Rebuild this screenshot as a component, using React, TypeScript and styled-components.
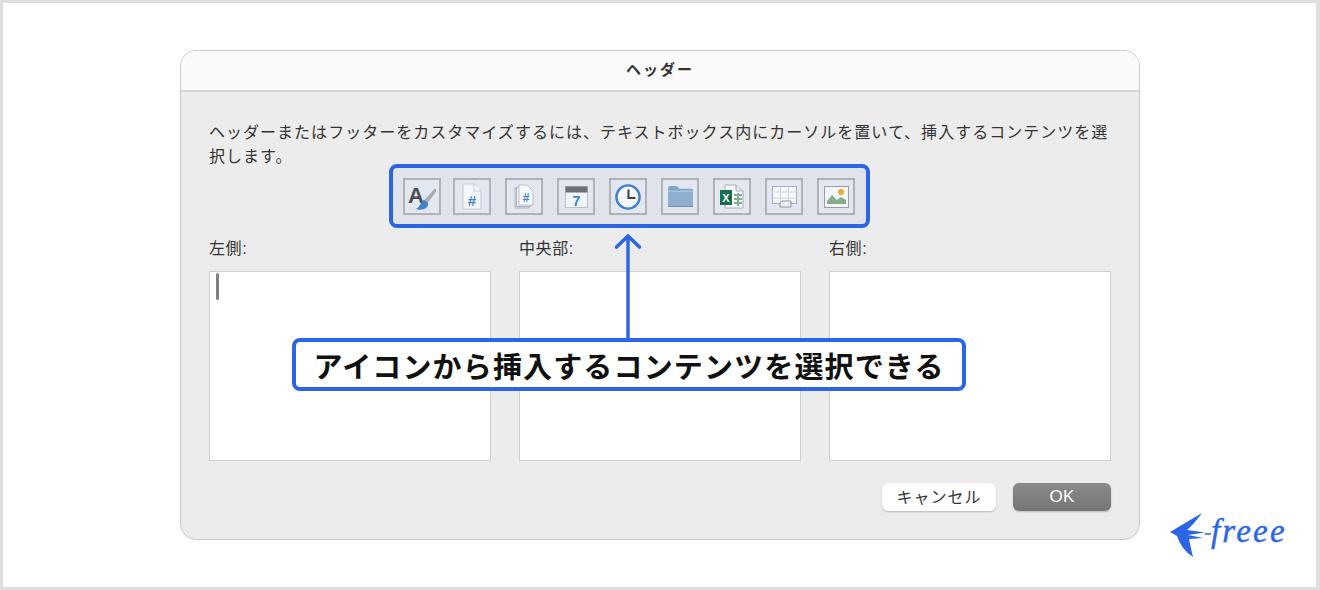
import React from 'react';
import styled, { createGlobalStyle } from 'styled-components';

const BLUE = '#2b65e6';
const ICON_BLUE = '#3f80d0';

const GlobalStyle = createGlobalStyle`
  html, body {
    margin: 0;
    padding: 0;
    background: #fff;
    font-family: "Liberation Sans", "Noto Sans CJK JP", sans-serif;
  }
  * { box-sizing: border-box; }
`;

const Page = styled.div`
  position: relative;
  width: 1320px;
  height: 590px;
  padding: 47px 177px;
  background: #fff;
  border: 3px solid #dedede;
  border-right-width: 4px;
`;

const Dialog = styled.div`
  position: relative;
  width: 960px;
  height: 490px;
  display: flex;
  flex-direction: column;
  background: #ececec;
  border: 1px solid #c9c9c9;
  border-radius: 16px;
  overflow: hidden;
`;

const TitleBar = styled.div`
  height: 41px;
  flex: none;
  display: flex;
  align-items: center;
  justify-content: center;
  padding-bottom: 4px;
  background: #fafafa;
  border-bottom: 2px solid #d6d6d6;
  font-size: 15px;
  font-weight: 700;
  letter-spacing: 2px;
  color: #333;
`;

const Body = styled.div`
  flex: 1;
  display: flex;
  flex-direction: column;
  padding: 29px 28px 0;
`;

const Intro = styled.p`
  margin: 0;
  font-size: 16px;
  line-height: 24px;
  letter-spacing: 1.02px;
  color: #333;
  width: 904px;
`;

const Toolbar = styled.div`
  align-self: flex-start;
  display: flex;
  gap: 14px;
  width: 481px;
  height: 64px;
  margin: -5px 0 0 180px;
  padding: 10px 10px;
  background: #e0e3ec;
  border: 4px solid ${BLUE};
  border-radius: 8px;
`;

const ToolButton = styled.div`
  width: 38px;
  height: 37px;
  flex: none;
  display: flex;
  align-items: center;
  justify-content: center;
  background: #e3e7f2;
  border: 2px solid #b1b2b6;

  &:first-child {
    margin-right: -2px;
  }
`;

const Columns = styled.div`
  display: grid;
  grid-template-columns: repeat(3, 282px);
  gap: 28px;
  margin-top: 10px;
`;

const Column = styled.div`
  display: flex;
  flex-direction: column;
`;

const ColumnLabel = styled.div`
  height: 33px;
  font-size: 16px;
  line-height: 22px;
  letter-spacing: 0.6px;
  color: #333;
`;

const TextBox = styled.div`
  position: relative;
  height: 190px;
  background: #fff;
  border: 1px solid #cfcfcf;
`;

const Caret = styled.span`
  position: absolute;
  left: 6px;
  top: 1px;
  width: 3px;
  height: 27px;
  border-radius: 2px;
  background: #808080;
`;

const Actions = styled.div`
  display: flex;
  justify-content: flex-end;
  gap: 17px;
  margin-top: 22px;
`;

const Button = styled.div<{ $primary?: boolean }>`
  height: 28px;
  width: ${(p) => (p.$primary ? '98px' : '114px')};
  display: flex;
  align-items: center;
  justify-content: center;
  padding-bottom: ${(p) => (p.$primary ? '0' : '2px')};
  border-radius: 6px;
  font-size: ${(p) => (p.$primary ? '17px' : '16px')};
  letter-spacing: ${(p) => (p.$primary ? '0.2px' : '1px')};
  color: ${(p) => (p.$primary ? '#fff' : '#333')};
  background: ${(p) => (p.$primary ? 'linear-gradient(#8a8a8a, #767676)' : '#fff')};
  box-shadow: 0 1px 2px rgba(0, 0, 0, 0.22);
`;

const Arrow = styled.svg`
  position: absolute;
  left: 431px;
  top: 182px;
`;

const Callout = styled.div`
  position: absolute;
  left: 111px;
  top: 287px;
  width: 674px;
  height: 53px;
  display: flex;
  align-items: center;
  justify-content: center;
  background: #fff;
  border: 4px solid ${BLUE};
  border-radius: 8px;
  font-size: 29px;
  font-weight: 700;
  letter-spacing: 1.15px;
  color: #111;
`;

const Logo = styled.div`
  position: absolute;
  left: 1164px;
  top: 506px;
  display: flex;
  align-items: center;
  color: ${BLUE};
`;

const Wordmark = styled.span`
  position: relative;
  top: -2px;
  font-family: "Liberation Serif", serif;
  font-style: italic;
  font-size: 33px;
  line-height: 33px;
  letter-spacing: 2.2px;
  -webkit-text-stroke: 0.4px ${BLUE};
`;

const StyleIcon = () => (
  <svg width="28" height="26" viewBox="0 0 28 26">
    <text x="0" y="19" fontFamily="Liberation Sans" fontWeight="700" fontSize="22" fill="#4a4d55">A</text>
    <path d="M27 5 L16 17 L19 19 L28 7 Z" fill="#a9adb8" stroke="#8b8f99" strokeWidth="0.6" />
    <path d="M16 16 C13 17 13 22 8 25 C15 27 21 24 20 19 Z" fill={ICON_BLUE} />
  </svg>
);

const PageIcon = () => (
  <svg width="20" height="27" viewBox="0 0 20 27">
    <path d="M1 1 H12 L19 8 V26 H1 Z" fill="#f4f6fb" stroke="#c6cad2" />
    <path d="M12 1 V8 H19" fill="#fbfcfe" stroke="#c6cad2" />
    <text x="10" y="23" textAnchor="middle" fontFamily="Liberation Sans" fontWeight="700" fontSize="15" fill={ICON_BLUE}>#</text>
  </svg>
);

const PagesIcon = () => (
  <svg width="20" height="25" viewBox="0 0 20 25">
    <path d="M1 4 H12 L15 7 V24 H1 Z" fill="#dfe2e9" stroke="#aeb2bb" />
    <path d="M2.5 3 H13 L17 7 V22.5 H2.5 Z" fill="#eceef4" stroke="#aeb2bb" />
    <path d="M5 1 H13 L19 7 V21 H5 Z" fill="#f6f8fc" stroke="#bcc0c9" />
    <text x="12" y="18" textAnchor="middle" fontFamily="Liberation Sans" fontWeight="700" fontSize="12" fill={ICON_BLUE}>#</text>
  </svg>
);

const CalendarIcon = () => (
  <svg width="23" height="22" viewBox="0 0 23 22">
    <rect x="0.5" y="0.5" width="22" height="21" fill="#f1f4f9" stroke="#bcc0c8" />
    <rect x="0.5" y="0.5" width="22" height="6" fill="#6e6f74" />
    <text x="11.5" y="20" textAnchor="middle" fontFamily="Liberation Sans" fontWeight="700" fontSize="14" fill={ICON_BLUE}>7</text>
  </svg>
);

const ClockIcon = () => (
  <svg width="26" height="26" viewBox="0 0 28 28">
    <circle cx="14" cy="14" r="12.5" fill="#f5f7fb" stroke={ICON_BLUE} strokeWidth="2.6" />
    <path d="M14.5 6 V15 H22" fill="none" stroke="#3d4149" strokeWidth="2.2" />
  </svg>
);

const FolderIcon = () => (
  <svg width="27" height="23" viewBox="0 0 28 24">
    <path d="M1 4 Q1 1 4 1 H10 L13 4 H26 Q27 4 27 6 V10 H1 Z" fill="#84a4c6" />
    <path d="M1 6 H27 V21 Q27 23 25 23 H3 Q1 23 1 21 Z" fill="#8fafd0" />
    <path d="M1 6 H27 V7 H1 Z" fill="#b4cbe2" />
    <path d="M1 22 H27 V23 H1 Z" fill="#6f8fb2" />
  </svg>
);

const ExcelIcon = () => (
  <svg width="24" height="25" viewBox="0 0 24 25">
    <path d="M5 1 H16 L23 7 V24 H5 Z" fill="#f8f9fc" stroke="#a9adb6" />
    <path d="M16 1 V7 H23" fill="#e3e6ec" stroke="#a9adb6" />
    <path d="M14 11 H22 M14 15 H22 M14 19 H22 M18 9 V22" stroke="#7fb08f" strokeWidth="2" fill="none" />
    <rect x="0" y="6" width="12" height="15" fill="#17704a" />
    <text x="6" y="18" textAnchor="middle" fontFamily="Liberation Sans" fontWeight="700" fontSize="11" fill="#fff">X</text>
  </svg>
);

const SheetIcon = () => (
  <svg width="25" height="22" viewBox="0 0 25 22">
    <rect x="0.5" y="0.5" width="24" height="17" fill="#f8f9fc" stroke="#a9adb6" />
    <path d="M0.5 6 H24.5 M0.5 12 H24.5 M8.5 0.5 V17.5 M16.5 0.5 V17.5" stroke="#cfd3da" fill="none" />
    <path d="M8 21 V17 L10 15 H19 V17.5 M8 21 H19 V17" fill="#eef0f5" stroke="#8f939c" />
  </svg>
);

const PictureIcon = () => (
  <svg width="25" height="22" viewBox="0 0 25 22">
    <rect x="0.5" y="0.5" width="24" height="21" fill="#f4f5f9" stroke="#9a9da5" />
    <circle cx="17" cy="6" r="3" fill="#e5ab3a" />
    <path d="M3 18 V15 L8 9 L13 14 L17 11 L22 14 V18 Z" fill="#83ad8d" />
  </svg>
);

const tools = [StyleIcon, PageIcon, PagesIcon, CalendarIcon, ClockIcon, FolderIcon, ExcelIcon, SheetIcon, PictureIcon];

const App: React.FC = () => (
  <Page>
    <GlobalStyle />
    <Dialog>
      <TitleBar>ヘッダー</TitleBar>
      <Body>
        <Intro>ヘッダーまたはフッターをカスタマイズするには、テキストボックス内にカーソルを置いて、挿入するコンテンツを選択します。</Intro>
        <Toolbar>
          {tools.map((Icon, i) => (
            <ToolButton key={i}><Icon /></ToolButton>
          ))}
        </Toolbar>
        <Columns>
          <Column>
            <ColumnLabel>左側:</ColumnLabel>
            <TextBox><Caret /></TextBox>
          </Column>
          <Column>
            <ColumnLabel>中央部:</ColumnLabel>
            <TextBox />
          </Column>
          <Column>
            <ColumnLabel>右側:</ColumnLabel>
            <TextBox />
          </Column>
        </Columns>
        <Actions>
          <Button>キャンセル</Button>
          <Button $primary>OK</Button>
        </Actions>
      </Body>
      <Arrow width="32" height="108" viewBox="0 0 32 108">
        <path d="M16 4 V106" stroke={BLUE} strokeWidth="3.4" fill="none" />
        <path d="M4.5 14 L16 3 L27.5 14" stroke={BLUE} strokeWidth="3.6" strokeLinecap="round" strokeLinejoin="round" fill="none" />
      </Arrow>
      <Callout>アイコンから挿入するコンテンツを選択できる</Callout>
    </Dialog>
    <Logo>
      <svg width="44" height="48" viewBox="0 0 44 48">
        <path d="M3 23 L35 4 Q27 15 20 21 L38 23.5 L21 26 L36 29 L22 30 Q24 40 26 48 Q14 40 10 27 Z" fill={BLUE} />
        <path d="M38 25 H46" stroke={BLUE} strokeWidth="1.6" />
      </svg>
      <Wordmark>freee</Wordmark>
    </Logo>
  </Page>
);

export default App;
